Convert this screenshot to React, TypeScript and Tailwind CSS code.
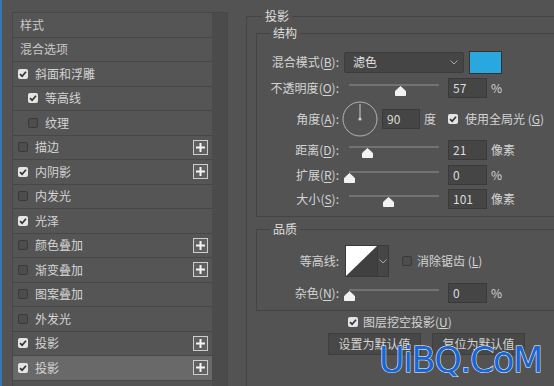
import React from 'react';

type Item = { t: string; c?: boolean; indent?: boolean; plus?: boolean; sel?: boolean; plain?: boolean };

const items: Item[] = [
  { t: '样式', plain: true },
  { t: '混合选项', plain: true },
  { t: '斜面和浮雕', c: true },
  { t: '等高线', c: true, indent: true },
  { t: '纹理', c: false, indent: true },
  { t: '描边', c: false, plus: true },
  { t: '内阴影', c: true, plus: true },
  { t: '内发光', c: false },
  { t: '光泽', c: true },
  { t: '颜色叠加', c: false, plus: true },
  { t: '渐变叠加', c: false, plus: true },
  { t: '图案叠加', c: false },
  { t: '外发光', c: false },
  { t: '投影', c: true, plus: true },
  { t: '投影', c: true, plus: true, sel: true },
];

const Check = ({ on }: { on?: boolean }) =>
  on ? (
    <span className="flex h-[10px] w-[10px] shrink-0 items-center justify-center rounded-[2px] bg-[#e4e4e4]">
      <svg width="8" height="8" viewBox="0 0 8 8">
        <path d="M1 4.2 L3.1 6.2 L7 1.8" fill="none" stroke="#333" strokeWidth="1.7" />
      </svg>
    </span>
  ) : (
    <span className="block h-[10px] w-[10px] shrink-0 rounded-[2px] border border-[#3a3a3a] bg-[#4d4d4d]" />
  );

const Plus = () => (
  <span className="ml-auto mr-[4px] flex h-[15px] w-[15px] items-center justify-center border border-[#cdcdcd] bg-[#606060]">
    <svg width="9" height="9" viewBox="0 0 9 9">
      <path d="M0 4.5 H9 M4.5 0 V9" stroke="#f4f4f4" strokeWidth="2" />
    </svg>
  </span>
);

const Lbl = ({ t, k }: { t: string; k: string }) => (
  <span className="w-[82px] shrink-0 text-right">
    {t}(<u className="underline-offset-2">{k}</u>):
  </span>
);

const Slider = ({ pct }: { pct: number }) => (
  <div className="relative ml-[5px] h-[20px] w-[100px] shrink-0">
    <div className="absolute left-[5px] top-[6px] h-[2px] w-[90px] bg-[#727272]" />
    <svg
      className="absolute top-[8px]"
      style={{ left: 5 + (pct * 90) / 100 - 5.5 }}
      width="11"
      height="10"
      viewBox="0 0 11 10"
    >
      <path d="M5.5 0.5 L10.5 5 L10.5 9.5 L0.5 9.5 L0.5 5 Z" fill="#f2f2f2" stroke="#f2f2f2" strokeLinejoin="round" />
    </svg>
  </div>
);

const Input = ({ v, w = 'w-[39px]' }: { v: string; w?: string }) => (
  <div className={`${w} ml-[4px] h-[20px] shrink-0 border border-[#3a3a3a] bg-[#454545] pl-[4px] text-[12px] leading-[18px] text-[#dcdcdc]`}>
    {v}
  </div>
);

const Chevron = () => (
  <svg width="8" height="5" viewBox="0 0 8 5">
    <path d="M0.5 0.5 L4 4 L7.5 0.5" fill="none" stroke="#a8a8a8" strokeWidth="1" />
  </svg>
);

export default function App() {
  return (
    <div className="relative flex h-[386px] w-[554px] overflow-hidden border-l-2 border-[#3a76b5] bg-[#535353] font-['Noto_Sans_CJK_SC','Noto_Sans',sans-serif] text-[12px] text-[#d4d4d4]">
      {/* style list */}
      <div className="ml-[10px] mt-[12px] flex h-[380px] w-[216px] shrink-0 border border-[#474747]">
        <div className="w-[199px] shrink-0">
          {items.map((it, i) => (
            <div
              key={i}
              className={`flex h-[24.5px] items-center border-b border-[#474747] ${it.sel ? 'bg-[#696969]' : 'bg-[#555555]'} ${
                it.plain ? 'pl-[7px] text-[#c8c8c8]' : it.indent ? 'pl-[15px]' : 'pl-[5px]'
              }`}
            >
              {!it.plain && <Check on={it.c} />}
              <span className={it.plain ? '' : 'ml-[7px]'}>{it.t}</span>
              {it.plus && <Plus />}
            </div>
          ))}
        </div>
        <div className="flex-1 bg-[#4b4b4b]" />
      </div>

      {/* drop shadow settings */}
      <fieldset className="ml-[18px] mt-[8px] h-[420px] w-[340px] shrink-0 border border-[#444444]">
        <legend className="ml-[15px] px-[3px] leading-[16px] text-[#dedede]">投影</legend>

        <fieldset className="ml-[9px] mt-[1px] border border-[#444444] pb-[5px] pt-[9px]">
          <legend className="ml-[13px] px-[3px] leading-[16px] text-[#dedede]">结构</legend>

          <div className="flex h-[24px] items-center">
            <Lbl t="混合模式" k="B" />
            <div className="ml-[5px] flex h-[21px] w-[120px] items-center justify-between rounded-[2px] border border-[#3c3c3c] bg-[#454545] pl-[8px] pr-[5px] text-[#e0e0e0]">
              <span>滤色</span>
              <Chevron />
            </div>
            <div className="ml-[5px] h-[23px] w-[33px] border border-[#333333] bg-[#29a8df]" />
          </div>

          <div className="flex h-[27px] items-center">
            <Lbl t="不透明度" k="O" />
            <Slider pct={57} />
            <Input v="57" />
            <span className="ml-[4px]">%</span>
          </div>

          <div className="flex h-[36px] items-center">
            <Lbl t="角度" k="A" />
            <svg className="ml-[3px] shrink-0" width="36" height="36" viewBox="0 0 36 36">
              <circle cx="18" cy="18" r="17" fill="none" stroke="#b4b4b4" strokeWidth="1" />
              <path d="M18 3 V17" stroke="#cfcfcf" strokeWidth="1" />
              <circle cx="18" cy="18" r="1.6" fill="#cfcfcf" />
            </svg>
            <Input v="90" w="w-[38px]" />
            <span className="ml-[4px]">度</span>
            <span className="ml-[12px]">
              <Check on />
            </span>
            <span className="ml-[7px] whitespace-nowrap">
              使用全局光 (<u>G</u>)
            </span>
          </div>

          <div className="flex h-[26px] items-center">
            <Lbl t="距离" k="D" />
            <Slider pct={21} />
            <Input v="21" />
            <span className="ml-[4px]">像素</span>
          </div>

          <div className="flex h-[24px] items-center">
            <Lbl t="扩展" k="R" />
            <Slider pct={0} />
            <Input v="0" />
            <span className="ml-[4px]">%</span>
          </div>

          <div className="flex h-[24px] items-center">
            <Lbl t="大小" k="S" />
            <Slider pct={44} />
            <Input v="101" />
            <span className="ml-[4px]">像素</span>
          </div>
        </fieldset>

        <fieldset className="ml-[9px] mt-[4px] border border-[#444444] pb-[5px] pt-[8px]">
          <legend className="ml-[13px] px-[3px] leading-[16px] text-[#dedede]">品质</legend>

          <div className="flex h-[32px] items-center">
            <span className="w-[82px] shrink-0 text-right">等高线:</span>
            <div className="ml-[6px] flex h-[32px] shrink-0 border border-[#3a3a3a]">
              <svg width="31" height="30" viewBox="0 0 31 30">
                <rect width="31" height="30" fill="#404040" />
                <path d="M0 0 H31 L0 30 Z" fill="#ffffff" />
              </svg>
              <div className="flex w-[11px] items-center justify-center border-l border-[#3a3a3a] bg-[#464646]">
                <Chevron />
              </div>
            </div>
            <span className="ml-[13px]">
              <Check />
            </span>
            <span className="ml-[5px] whitespace-nowrap">
              消除锯齿 (<u>L</u>)
            </span>
          </div>

          <div className="mt-[4px] flex h-[24px] items-center">
            <Lbl t="杂色" k="N" />
            <Slider pct={0} />
            <Input v="0" />
            <span className="ml-[4px]">%</span>
          </div>
        </fieldset>

        <div className="mt-[1px] flex h-[20px] items-center pl-[101px]">
          <Check on />
          <span className="ml-[5px]">
            图层挖空投影(<u>U</u>)
          </span>
        </div>

        <div className="ml-[81px] mt-[1px] flex gap-[11px]">
          <button className="h-[22px] w-[93px] border border-[#3e3e3e] bg-[#484848] text-[#d2d2d2]">设置为默认值</button>
          <button className="h-[22px] w-[93px] border border-[#3e3e3e] bg-[#484848] text-[#d2d2d2]">复位为默认值</button>
        </div>
      </fieldset>

      {/* watermark */}
      <div className="absolute left-[377px] top-[340px] font-['DejaVu_Sans',sans-serif] text-[35px] leading-[40px] tracking-[-1.4px] text-[#1766d6] [-webkit-text-stroke:1px_#ffffff] [paint-order:stroke_fill]">
        UiBQ.CoM
      </div>
    </div>
  );
}
